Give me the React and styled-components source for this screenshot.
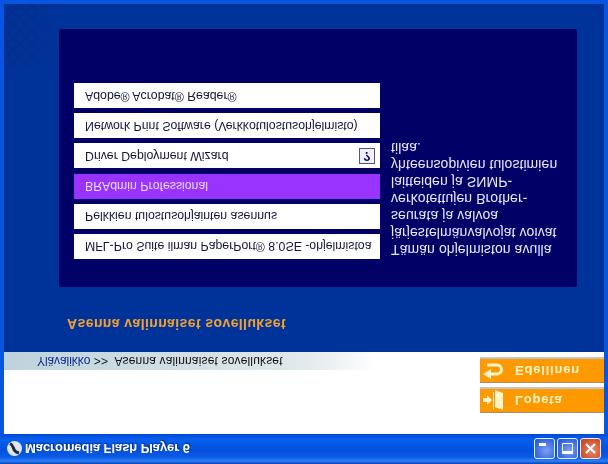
import React from 'react';
import styled, { createGlobalStyle } from 'styled-components';

const GlobalStyle = createGlobalStyle`
  html, body {
    margin: 0;
    padding: 0;
    background: #003399;
  }
`;

// the whole window is shown upside down in the reference
const Window = styled.div`
  width: 608px;
  height: 464px;
  display: flex;
  flex-direction: column;
  overflow: hidden;
  box-sizing: border-box;
  transform: scaleY(-1);
  background: #0a55e0;
  font-family: "Liberation Sans", Arial, sans-serif;
`;

const TitleBar = styled.div`
  height: 30px;
  flex: none;
  display: flex;
  align-items: center;
  padding: 0 7px 0 7px;
  box-sizing: border-box;
  background: linear-gradient(to bottom, #0b3fb5 0, #2a80f8 3px, #0a5ae4 7px, #0450dc 14px, #0660ee 24px, #0048d8 30px);
`;

const TitleText = styled.span`
  flex: 1;
  margin-left: 3px;
  color: #fff;
  font-size: 13px;
  font-weight: bold;
  letter-spacing: -0.08px;
  text-shadow: 1px 1px 1px #0a2a80;
`;

const CaptionButtons = styled.div`
  display: flex;
  gap: 2px;
`;

const CaptionButton = styled.div`
  width: 21px;
  height: 21px;
  box-sizing: border-box;
  border: 1px solid #e8eeff;
  border-radius: 3px;
  display: flex;
  align-items: center;
  justify-content: center;
  background: ${(props) =>
    props.$close
      ? 'radial-gradient(circle at 60% 40%, #e88a6c, #d0502c 70%, #b8401c)'
      : 'radial-gradient(circle at 60% 40%, #7ca0f4, #3466dc 70%, #2850c8)'};
`;

const Client = styled.div`
  flex: 1;
  display: flex;
  flex-direction: column;
  margin: 0 4px 4px;
  background: #003399;
`;

const Header = styled.div`
  height: 82px;
  flex: none;
  display: grid;
  background: #fff;
`;

const ButtonStack = styled.div`
  grid-area: 1 / 1;
  z-index: 1;
  align-self: start;
  justify-self: end;
  margin-top: 21px;
  display: flex;
  flex-direction: column;
  gap: 4px;
`;

const OrangeButton = styled.div`
  width: 124px;
  height: 26px;
  box-sizing: border-box;
  display: flex;
  align-items: center;
  background: #ff9900;
  border-top: 1px solid #a88c64;
  border-bottom: 2px solid #c4c4c4;
  padding-left: 3px;
  color: #fff4c8;
  font-size: 13px;
  font-weight: bold;
  letter-spacing: 0.8px;
`;

const ButtonIcon = styled.svg`
  width: 20px;
  height: 20px;
  flex: none;
  margin-right: 12px;
`;

const Breadcrumb = styled.div`
  grid-area: 1 / 1;
  align-self: end;
  height: 18px;
  display: flex;
  align-items: center;
  padding-left: 33px;
  font-size: 12px;
  letter-spacing: 0.16px;
  color: #111;
  white-space: pre;
  background: linear-gradient(to right, #bdd3db 0, #e0e9ec 50%, #ffffff 62%);
`;

const CrumbLink = styled.span`
  color: #102a90;
  letter-spacing: -0.08px;
`;

const Body = styled.div`
  position: relative;
  flex: 1;
  display: flex;
  flex-direction: column;
  padding: 18px 27px 25px 55px;
  overflow: hidden;
  &::before {
    content: "";
    position: absolute;
    left: 2px;
    bottom: 0;
    width: 52px;
    height: 62px;
    opacity: 0.4;
    background:
      repeating-linear-gradient(45deg, rgba(12, 40, 120, 0.7) 0 3px, transparent 3px 9px),
      repeating-linear-gradient(-45deg, rgba(12, 40, 120, 0.7) 0 3px, transparent 3px 9px);
    mask-image: linear-gradient(to right, #000 40%, transparent);
  }
`;

const Heading = styled.h1`
  margin: 0 0 27px 8px;
  height: 20px;
  line-height: 20px;
  font-size: 14px;
  font-weight: bold;
  color: #f2a030;
  letter-spacing: 0.4px;
  position: relative;
`;

const Panel = styled.div`
  position: relative;
  width: 518px;
  height: 258px;
  box-sizing: border-box;
  display: flex;
  gap: 11px;
  padding: 28px 15px 0;
  background: #000066;
  border-radius: 2px;
`;

const MenuList = styled.div`
  width: 306px;
  flex: none;
  display: flex;
  flex-direction: column;
  gap: 5.2px;
`;

const MenuRow = styled.div`
  height: 25px;
  box-sizing: border-box;
  display: flex;
  align-items: center;
  justify-content: space-between;
  padding: 0 5px 0 11px;
  font-size: 12.3px;
  white-space: nowrap;
  background: ${(props) => (props.$active ? '#9933ff' : '#ffffff')};
  color: ${(props) => (props.$active ? '#e8dcff' : '#14143c')};
`;

const HelpBox = styled.span`
  width: 16px;
  height: 16px;
  box-sizing: border-box;
  border: 1px solid #555577;
  background: #f0f0f8;
  display: flex;
  align-items: center;
  justify-content: center;
  font-size: 12px;
  font-weight: bold;
  color: #000066;
`;

const Description = styled.div`
  width: 172px;
  margin-top: 1px;
  font-size: 14px;
  letter-spacing: 0.08px;
  line-height: 17px;
  color: #e8e8ff;
`;

const FlashIcon = () => (
  <svg width="15" height="15" viewBox="0 0 15 15">
    <circle cx="7.5" cy="7.5" r="7.5" fill="#dfe6f2" />
    <path d="M3 12.5C6 11 6 9 7 6.5 8 4 10 3.5 12 3" fill="none" stroke="#20283c" strokeWidth="3" />
  </svg>
);

const menuItems = [
  'MFL-Pro Suite ilman PaperPort® 8.0SE -ohjelmistoa',
  'Pelkkien tulostusohjainten asennus',
  'BRAdmin Professional',
  'Driver Deployment Wizard',
  'Network Print Software (Verkkotulostusohjelmisto)',
  'Adobe® Acrobat® Reader®',
];

export default function App() {
  return (
    <>
      <GlobalStyle />
      <Window>
        <TitleBar>
          <FlashIcon />
          <TitleText>Macromedia Flash Player 6</TitleText>
          <CaptionButtons>
            <CaptionButton>
              <svg width="13" height="13" viewBox="0 0 13 13">
                <rect x="1" y="9" width="7" height="3" fill="#fff" />
              </svg>
            </CaptionButton>
            <CaptionButton>
              <svg width="13" height="13" viewBox="0 0 13 13">
                <path d="M1.5 1.5h10v10h-10z" fill="none" stroke="#fff" strokeWidth="1" />
                <rect x="1" y="1" width="11" height="3" fill="#fff" />
              </svg>
            </CaptionButton>
            <CaptionButton $close>
              <svg width="13" height="13" viewBox="0 0 13 13">
                <path d="M2 2l9 9M11 2l-9 9" stroke="#fff" strokeWidth="2" />
              </svg>
            </CaptionButton>
          </CaptionButtons>
        </TitleBar>
        <Client>
          <Header>
            <ButtonStack>
              <OrangeButton>
                <ButtonIcon viewBox="0 0 20 20">
                  <path d="M0 8h4V5l5 5-5 5v-3H0z" fill="#fff4c8" />
                  <path d="M10.5 1v17" stroke="#fff4c8" strokeWidth="1" />
                  <path d="M12 3l8-3v17l-8 3z" fill="#fff4c8" />
                </ButtonIcon>
                Lopeta
              </OrangeButton>
              <OrangeButton>
                <ButtonIcon viewBox="0 0 20 20">
                  <path d="M0 6 8 1v10z" fill="#fff4c8" />
                  <path d="M6 6h8a4.5 4.5 0 0 1 0 9H4" fill="none" stroke="#fff4c8" strokeWidth="3" />
                </ButtonIcon>
                Edellinen
              </OrangeButton>
            </ButtonStack>
            <Breadcrumb>
              <CrumbLink>Ylävalikko</CrumbLink>
              {' >>  Asenna valinnaiset sovellukset'}
            </Breadcrumb>
          </Header>
          <Body>
            <Heading>Asenna valinnaiset sovellukset</Heading>
            <Panel>
              <MenuList>
                {menuItems.map((item) => (
                  <MenuRow key={item} $active={item === 'BRAdmin Professional'}>
                    {item}
                    {item === 'Driver Deployment Wizard' && <HelpBox>?</HelpBox>}
                  </MenuRow>
                ))}
              </MenuList>
              <Description>
                Tämän ohjelmiston avulla järjestelmänvalvojat voivat seurata ja valvoa verkotettujen Brother-laitteiden ja
                SNMP-yhteensopivien tulostimien tilaa.
              </Description>
            </Panel>
          </Body>
        </Client>
      </Window>
    </>
  );
}
